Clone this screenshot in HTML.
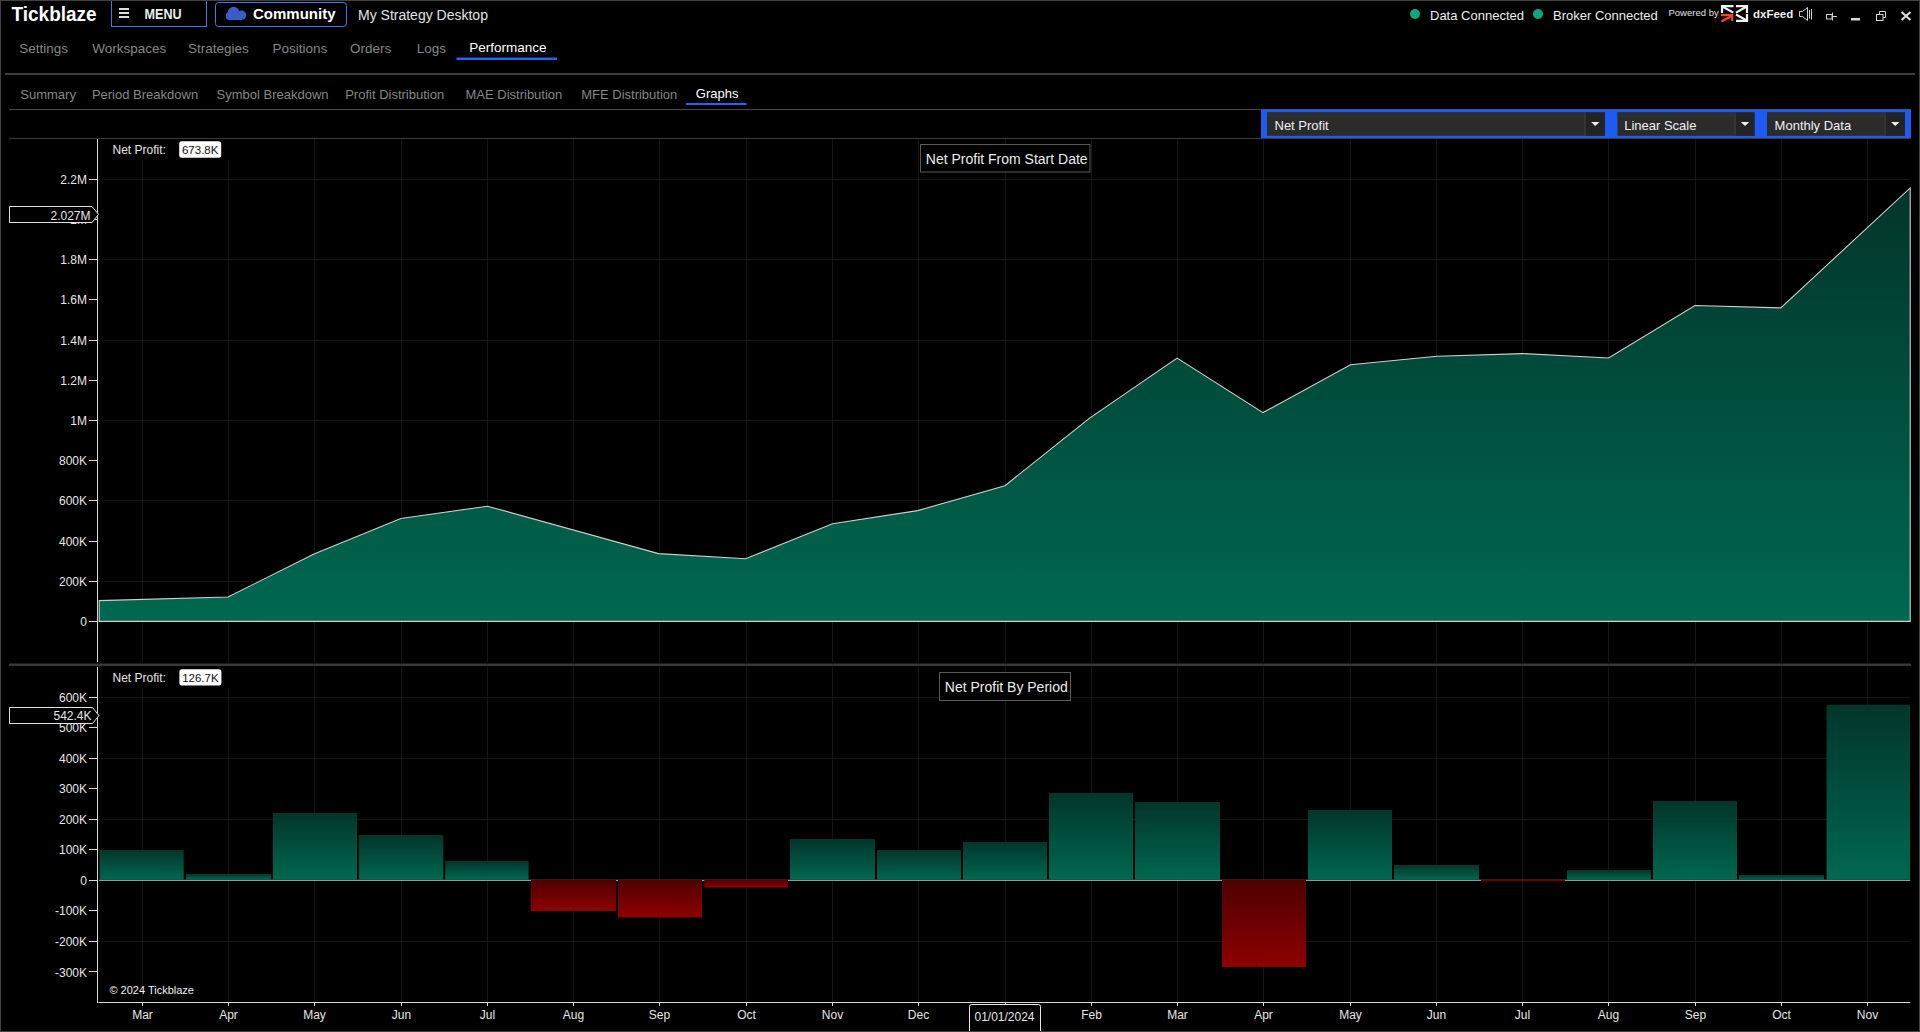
<!DOCTYPE html>
<html><head><meta charset="utf-8"><title>Tickblaze</title>
<style>
html,body{margin:0;padding:0;background:#000;width:1920px;height:1032px;overflow:hidden;}
svg{display:block;font-family:"Liberation Sans", sans-serif;}
</style></head><body>
<svg width="1920" height="1032" viewBox="0 0 1920 1032" shape-rendering="auto">
<rect x="0" y="0" width="1920" height="1032" fill="#000"/>
<rect x="0.5" y="0.5" width="1919" height="1031" fill="none" stroke="#404040" stroke-width="1" rx="0" />
<text transform="translate(11.5,20.9) scale(1,1.075)" font-size="19" fill="#ffffff" font-weight="bold">Tickblaze</text>
<rect x="111.5" y="-2" width="95" height="28.5" fill="none" stroke="#4677f0" stroke-width="1" rx="0" />
<rect x="119" y="8" width="10" height="2" fill="#dedede" stroke="none" stroke-width="1" rx="0" />
<rect x="119" y="12" width="10" height="2" fill="#dedede" stroke="none" stroke-width="1" rx="0" />
<rect x="119" y="16" width="10" height="2" fill="#dedede" stroke="none" stroke-width="1" rx="0" />
<text transform="translate(144.6,18.9) scale(0.9,1)" font-size="14" fill="#ececec" font-weight="bold" text-anchor="start">MENU</text>
<rect x="215.5" y="2.5" width="131" height="24" fill="none" stroke="#4677f0" stroke-width="1" rx="3" />
<g fill="#3a5cc8"><circle cx="233.6" cy="12.6" r="5.9"/><circle cx="241.6" cy="15.3" r="4.7"/><circle cx="229.6" cy="16" r="3.9"/><rect x="229.6" y="13" width="12" height="7"/></g>
<text x="253" y="18.9" font-size="15" fill="#ffffff" font-weight="bold" text-anchor="start" >Community</text>
<text x="358" y="20" font-size="14" fill="#e4e4e4" font-weight="normal" text-anchor="start" >My Strategy Desktop</text>
<circle cx="1415" cy="14" r="5" fill="#0ba882"/>
<text x="1430" y="19.7" font-size="13" fill="#ececec" font-weight="normal" text-anchor="start" >Data Connected</text>
<circle cx="1538" cy="14" r="5" fill="#0ba882"/>
<text x="1553" y="19.7" font-size="13" fill="#ececec" font-weight="normal" text-anchor="start" >Broker Connected</text>
<text x="1668.5" y="15.7" font-size="9.5" fill="#e0e0e0" font-weight="normal" text-anchor="start" >Powered by</text>
<g fill="none" stroke="#f4f4f4" stroke-width="2.2" stroke-linecap="butt"><path d="M1722,13 V6.1 H1733.5"/><path d="M1722.8,6.8 L1733.3,12.6"/><path d="M1736,6.1 H1747 V13"/><path d="M1746.3,6.8 L1736,12.6"/><path d="M1736,20.9 H1747 V14"/><path d="M1746.3,20.2 L1736,14.5"/></g><g fill="none" stroke="#f2442a" stroke-width="2.2"><path d="M1721.5,21.5 L1732,15.8"/><path d="M1721,15.2 H1732.2 V21"/></g>
<text x="1753" y="17.5" font-size="11.5" fill="#f0f0f0" font-weight="bold" text-anchor="start" >dxFeed</text>
<g fill="none" stroke="#cfcfcf" stroke-width="1"><path d="M1799.5,11.5 H1802.5 L1807.5,7.5 V20.5 L1802.5,16.5 H1799.5 Z"/><path d="M1809.5,10 V18.5"/><path d="M1811.5,9 V19.5"/></g>
<g fill="none" stroke="#d0d0d0" stroke-width="1"><rect x="1826.5" y="14.5" width="5.5" height="4.5"/><path d="M1832.5,12.5 V20.5"/><path d="M1832.5,16.5 H1837"/></g>
<rect x="1851" y="18" width="9" height="2.5" fill="#d6d6d6" stroke="none" stroke-width="1" rx="0" />
<g fill="none" stroke="#d6d6d6" stroke-width="1"><path d="M1879.5,14 V11.5 H1885.5 V17.5 H1883"/><rect x="1876.5" y="14.5" width="6.5" height="6"/></g>
<g stroke="#e0e0e0" stroke-width="2"><path d="M1901.5,12 L1910.5,20 M1910.5,12 L1901.5,20"/></g>
<text x="19.2" y="53" font-size="13.5" fill="#868686" font-weight="normal" text-anchor="start" >Settings</text>
<text x="92.2" y="53" font-size="13.5" fill="#868686" font-weight="normal" text-anchor="start" >Workspaces</text>
<text x="188" y="53" font-size="13.5" fill="#868686" font-weight="normal" text-anchor="start" >Strategies</text>
<text x="272.5" y="53" font-size="13.5" fill="#868686" font-weight="normal" text-anchor="start" >Positions</text>
<text x="350" y="53" font-size="13.5" fill="#868686" font-weight="normal" text-anchor="start" >Orders</text>
<text x="416.7" y="53" font-size="13.5" fill="#868686" font-weight="normal" text-anchor="start" >Logs</text>
<text x="469.2" y="52" font-size="13.5" fill="#ffffff" font-weight="normal" text-anchor="start" >Performance</text>
<rect x="456.5" y="57.5" width="100.5" height="2.5" fill="#2563f5" stroke="none" stroke-width="1" rx="0" />
<rect x="5" y="73" width="1910" height="2" fill="#3d3d3d" stroke="none" stroke-width="1" rx="0" />
<text x="20.3" y="99" font-size="13" fill="#868686" font-weight="normal" text-anchor="start" >Summary</text>
<text x="91.9" y="99" font-size="13" fill="#868686" font-weight="normal" text-anchor="start" >Period Breakdown</text>
<text x="216.6" y="99" font-size="13" fill="#868686" font-weight="normal" text-anchor="start" >Symbol Breakdown</text>
<text x="345.2" y="99" font-size="13" fill="#868686" font-weight="normal" text-anchor="start" >Profit Distribution</text>
<text x="465.5" y="99" font-size="13" fill="#868686" font-weight="normal" text-anchor="start" >MAE Distribution</text>
<text x="581.2" y="99" font-size="13" fill="#868686" font-weight="normal" text-anchor="start" >MFE Distribution</text>
<text x="695.8" y="98" font-size="13" fill="#ffffff" font-weight="normal" text-anchor="start" >Graphs</text>
<rect x="686" y="103" width="60.5" height="2" fill="#2563f5" stroke="none" stroke-width="1" rx="0" />
<rect x="9" y="109" width="1902" height="1" fill="#4a4a4a" stroke="none" stroke-width="1" rx="0" />
<rect x="1261" y="109.5" width="650" height="29" fill="#1f5af2" stroke="none" stroke-width="1" rx="0" />
<rect x="1267" y="112.3" width="338" height="23.5" fill="#2b2b2b" stroke="none" stroke-width="1" rx="0" />
<rect x="1267" y="112.3" width="317.5" height="5" fill="#2f2f2f" stroke="none" stroke-width="1" rx="0" />
<rect x="1584.5" y="112.3" width="20.5" height="23.5" fill="#232323" stroke="none" stroke-width="1" rx="0" />
<rect x="1584.5" y="112.3" width="1" height="23.5" fill="#444444" stroke="none" stroke-width="1" rx="0" />
<text x="1274.5" y="129.8" font-size="13" fill="#f0f0f0" font-weight="normal" text-anchor="start" >Net Profit</text>
<path d="M1591.05,122 H1599.45 L1595.25,126 Z" fill="#f0f0f0"/>
<rect x="1617.5" y="112.3" width="137.0" height="23.5" fill="#2b2b2b" stroke="none" stroke-width="1" rx="0" />
<rect x="1617.5" y="112.3" width="117.0" height="5" fill="#2f2f2f" stroke="none" stroke-width="1" rx="0" />
<rect x="1734.5" y="112.3" width="20.0" height="23.5" fill="#232323" stroke="none" stroke-width="1" rx="0" />
<rect x="1734.5" y="112.3" width="1" height="23.5" fill="#444444" stroke="none" stroke-width="1" rx="0" />
<text x="1624.2" y="129.8" font-size="13" fill="#f0f0f0" font-weight="normal" text-anchor="start" >Linear Scale</text>
<path d="M1740.8,122 H1749.2 L1745.0,126 Z" fill="#f0f0f0"/>
<rect x="1767" y="112.3" width="138" height="23.5" fill="#2b2b2b" stroke="none" stroke-width="1" rx="0" />
<rect x="1767" y="112.3" width="117.5" height="5" fill="#2f2f2f" stroke="none" stroke-width="1" rx="0" />
<rect x="1884.5" y="112.3" width="20.5" height="23.5" fill="#232323" stroke="none" stroke-width="1" rx="0" />
<rect x="1884.5" y="112.3" width="1" height="23.5" fill="#444444" stroke="none" stroke-width="1" rx="0" />
<text x="1774.6" y="129.8" font-size="13" fill="#f0f0f0" font-weight="normal" text-anchor="start" >Monthly Data</text>
<path d="M1891.05,122 H1899.45 L1895.25,126 Z" fill="#f0f0f0"/>
<rect x="9" y="138" width="1902" height="1" fill="#3a3a3a" stroke="none" stroke-width="1" rx="0" />
<rect x="98" y="581" width="1812.2" height="1" fill="#141414" stroke="none" stroke-width="1" rx="0" />
<rect x="98" y="500" width="1812.2" height="1" fill="#141414" stroke="none" stroke-width="1" rx="0" />
<rect x="98" y="420" width="1812.2" height="1" fill="#141414" stroke="none" stroke-width="1" rx="0" />
<rect x="98" y="340" width="1812.2" height="1" fill="#141414" stroke="none" stroke-width="1" rx="0" />
<rect x="98" y="259" width="1812.2" height="1" fill="#141414" stroke="none" stroke-width="1" rx="0" />
<rect x="98" y="179" width="1812.2" height="1" fill="#141414" stroke="none" stroke-width="1" rx="0" />
<rect x="142" y="139" width="1" height="523" fill="#141414" stroke="none" stroke-width="1" rx="0" />
<rect x="228" y="139" width="1" height="523" fill="#141414" stroke="none" stroke-width="1" rx="0" />
<rect x="314" y="139" width="1" height="523" fill="#141414" stroke="none" stroke-width="1" rx="0" />
<rect x="401" y="139" width="1" height="523" fill="#141414" stroke="none" stroke-width="1" rx="0" />
<rect x="487" y="139" width="1" height="523" fill="#141414" stroke="none" stroke-width="1" rx="0" />
<rect x="573" y="139" width="1" height="523" fill="#141414" stroke="none" stroke-width="1" rx="0" />
<rect x="659" y="139" width="1" height="523" fill="#141414" stroke="none" stroke-width="1" rx="0" />
<rect x="746" y="139" width="1" height="523" fill="#141414" stroke="none" stroke-width="1" rx="0" />
<rect x="832" y="139" width="1" height="523" fill="#141414" stroke="none" stroke-width="1" rx="0" />
<rect x="918" y="139" width="1" height="523" fill="#141414" stroke="none" stroke-width="1" rx="0" />
<rect x="1005" y="139" width="1" height="523" fill="#141414" stroke="none" stroke-width="1" rx="0" />
<rect x="1091" y="139" width="1" height="523" fill="#141414" stroke="none" stroke-width="1" rx="0" />
<rect x="1177" y="139" width="1" height="523" fill="#141414" stroke="none" stroke-width="1" rx="0" />
<rect x="1263" y="139" width="1" height="523" fill="#141414" stroke="none" stroke-width="1" rx="0" />
<rect x="1350" y="139" width="1" height="523" fill="#141414" stroke="none" stroke-width="1" rx="0" />
<rect x="1436" y="139" width="1" height="523" fill="#141414" stroke="none" stroke-width="1" rx="0" />
<rect x="1522" y="139" width="1" height="523" fill="#141414" stroke="none" stroke-width="1" rx="0" />
<rect x="1608" y="139" width="1" height="523" fill="#141414" stroke="none" stroke-width="1" rx="0" />
<rect x="1695" y="139" width="1" height="523" fill="#141414" stroke="none" stroke-width="1" rx="0" />
<rect x="1781" y="139" width="1" height="523" fill="#141414" stroke="none" stroke-width="1" rx="0" />
<rect x="1867" y="139" width="1" height="523" fill="#141414" stroke="none" stroke-width="1" rx="0" />
<defs><linearGradient id="ga" gradientUnits="userSpaceOnUse" x1="0" y1="188" x2="0" y2="621"><stop offset="0" stop-color="#02352a"/><stop offset="1" stop-color="#006850"/></linearGradient></defs>
<polygon points="99.2,621.4 99.2,600.6 228.0,597.0 314.0,554.0 400.9,518.5 487.5,506.2 658.5,553.6 745.6,558.8 832.5,523.8 917.7,510.6 1005.0,485.7 1089.6,418.1 1177.1,358.1 1263.0,412.6 1350.5,364.7 1437.0,356.2 1522.7,353.6 1608.6,358.0 1695.0,305.5 1780.8,307.9 1910.2,187.9 1910.2,621.4" fill="url(#ga)" stroke="#cfcfcf" stroke-width="1.1"/>
<rect x="97" y="139" width="1" height="523" fill="#d8d8d8" stroke="none" stroke-width="1" rx="0" />
<rect x="89" y="621" width="8" height="1" fill="#d8d8d8" stroke="none" stroke-width="1" rx="0" />
<text x="87" y="626.0" font-size="12" fill="#e6e6e6" font-weight="normal" text-anchor="end" >0</text>
<rect x="89" y="581" width="8" height="1" fill="#d8d8d8" stroke="none" stroke-width="1" rx="0" />
<text x="87" y="585.8" font-size="12" fill="#e6e6e6" font-weight="normal" text-anchor="end" >200K</text>
<rect x="89" y="541" width="8" height="1" fill="#d8d8d8" stroke="none" stroke-width="1" rx="0" />
<text x="87" y="545.6" font-size="12" fill="#e6e6e6" font-weight="normal" text-anchor="end" >400K</text>
<rect x="89" y="500" width="8" height="1" fill="#d8d8d8" stroke="none" stroke-width="1" rx="0" />
<text x="87" y="505.4" font-size="12" fill="#e6e6e6" font-weight="normal" text-anchor="end" >600K</text>
<rect x="89" y="460" width="8" height="1" fill="#d8d8d8" stroke="none" stroke-width="1" rx="0" />
<text x="87" y="465.20000000000005" font-size="12" fill="#e6e6e6" font-weight="normal" text-anchor="end" >800K</text>
<rect x="89" y="420" width="8" height="1" fill="#d8d8d8" stroke="none" stroke-width="1" rx="0" />
<text x="87" y="425.0" font-size="12" fill="#e6e6e6" font-weight="normal" text-anchor="end" >1M</text>
<rect x="89" y="380" width="8" height="1" fill="#d8d8d8" stroke="none" stroke-width="1" rx="0" />
<text x="87" y="384.8" font-size="12" fill="#e6e6e6" font-weight="normal" text-anchor="end" >1.2M</text>
<rect x="89" y="340" width="8" height="1" fill="#d8d8d8" stroke="none" stroke-width="1" rx="0" />
<text x="87" y="344.6" font-size="12" fill="#e6e6e6" font-weight="normal" text-anchor="end" >1.4M</text>
<rect x="89" y="299" width="8" height="1" fill="#d8d8d8" stroke="none" stroke-width="1" rx="0" />
<text x="87" y="304.40000000000003" font-size="12" fill="#e6e6e6" font-weight="normal" text-anchor="end" >1.6M</text>
<rect x="89" y="259" width="8" height="1" fill="#d8d8d8" stroke="none" stroke-width="1" rx="0" />
<text x="87" y="264.20000000000005" font-size="12" fill="#e6e6e6" font-weight="normal" text-anchor="end" >1.8M</text>
<rect x="89" y="219" width="8" height="1" fill="#d8d8d8" stroke="none" stroke-width="1" rx="0" />
<text x="87" y="224.00000000000003" font-size="12" fill="#e6e6e6" font-weight="normal" text-anchor="end" >2M</text>
<rect x="89" y="179" width="8" height="1" fill="#d8d8d8" stroke="none" stroke-width="1" rx="0" />
<text x="87" y="183.79999999999998" font-size="12" fill="#e6e6e6" font-weight="normal" text-anchor="end" >2.2M</text>
<rect x="98" y="139" width="137" height="21" fill="#000" stroke="none" stroke-width="1" rx="0" />
<text x="112.5" y="153.7" font-size="12" fill="#e6e6e6" font-weight="normal" text-anchor="start" >Net Profit:</text>
<rect x="179.2" y="141.3" width="42" height="16.4" fill="#ffffff" stroke="none" stroke-width="1" rx="2.5" />
<text x="200.2" y="153.6" font-size="11.5" fill="#111111" font-weight="normal" text-anchor="middle" >673.8K</text>
<rect x="920.5" y="144.5" width="169.5" height="27.5" fill="#000" stroke="#5a5a5a" stroke-width="1" rx="0" />
<text x="925.8" y="163.6" font-size="14" fill="#ececec" font-weight="normal" text-anchor="start" >Net Profit From Start Date</text>
<path d="M9.5,206.5 H92 L98.5,214.3 L92,222.5 H9.5 Z" fill="#000" stroke="#e0e0e0" stroke-width="1"/>
<text x="90.5" y="219.8" font-size="12" fill="#e6e6e6" font-weight="normal" text-anchor="end" >2.027M</text>
<rect x="9" y="663.5" width="1902" height="2.5" fill="#383838" stroke="none" stroke-width="1" rx="0" />
<rect x="98" y="697" width="1812.2" height="1" fill="#141414" stroke="none" stroke-width="1" rx="0" />
<rect x="98" y="758" width="1812.2" height="1" fill="#141414" stroke="none" stroke-width="1" rx="0" />
<rect x="98" y="819" width="1812.2" height="1" fill="#141414" stroke="none" stroke-width="1" rx="0" />
<rect x="98" y="941" width="1812.2" height="1" fill="#141414" stroke="none" stroke-width="1" rx="0" />
<rect x="142" y="667" width="1" height="335" fill="#141414" stroke="none" stroke-width="1" rx="0" />
<rect x="228" y="667" width="1" height="335" fill="#141414" stroke="none" stroke-width="1" rx="0" />
<rect x="314" y="667" width="1" height="335" fill="#141414" stroke="none" stroke-width="1" rx="0" />
<rect x="401" y="667" width="1" height="335" fill="#141414" stroke="none" stroke-width="1" rx="0" />
<rect x="487" y="667" width="1" height="335" fill="#141414" stroke="none" stroke-width="1" rx="0" />
<rect x="573" y="667" width="1" height="335" fill="#141414" stroke="none" stroke-width="1" rx="0" />
<rect x="659" y="667" width="1" height="335" fill="#141414" stroke="none" stroke-width="1" rx="0" />
<rect x="746" y="667" width="1" height="335" fill="#141414" stroke="none" stroke-width="1" rx="0" />
<rect x="832" y="667" width="1" height="335" fill="#141414" stroke="none" stroke-width="1" rx="0" />
<rect x="918" y="667" width="1" height="335" fill="#141414" stroke="none" stroke-width="1" rx="0" />
<rect x="1005" y="667" width="1" height="335" fill="#141414" stroke="none" stroke-width="1" rx="0" />
<rect x="1091" y="667" width="1" height="335" fill="#141414" stroke="none" stroke-width="1" rx="0" />
<rect x="1177" y="667" width="1" height="335" fill="#141414" stroke="none" stroke-width="1" rx="0" />
<rect x="1263" y="667" width="1" height="335" fill="#141414" stroke="none" stroke-width="1" rx="0" />
<rect x="1350" y="667" width="1" height="335" fill="#141414" stroke="none" stroke-width="1" rx="0" />
<rect x="1436" y="667" width="1" height="335" fill="#141414" stroke="none" stroke-width="1" rx="0" />
<rect x="1522" y="667" width="1" height="335" fill="#141414" stroke="none" stroke-width="1" rx="0" />
<rect x="1608" y="667" width="1" height="335" fill="#141414" stroke="none" stroke-width="1" rx="0" />
<rect x="1695" y="667" width="1" height="335" fill="#141414" stroke="none" stroke-width="1" rx="0" />
<rect x="1781" y="667" width="1" height="335" fill="#141414" stroke="none" stroke-width="1" rx="0" />
<rect x="1867" y="667" width="1" height="335" fill="#141414" stroke="none" stroke-width="1" rx="0" />
<line x1="99" y1="880.3" x2="1910.2" y2="880.3" stroke="#bdbdbd" stroke-width="1" />
<defs><linearGradient id="gg" x1="0" y1="0" x2="0" y2="1"><stop offset="0" stop-color="#02352a"/><stop offset="1" stop-color="#006850"/></linearGradient><linearGradient id="gr" x1="0" y1="0" x2="0" y2="1"><stop offset="0" stop-color="#4e0000"/><stop offset="1" stop-color="#8e0000"/></linearGradient></defs>
<rect x="99.6" y="850" width="84.1" height="29.8" fill="url(#gg)" stroke="none" stroke-width="1" rx="0" />
<rect x="185.9" y="874" width="85.3" height="5.8" fill="url(#gg)" stroke="none" stroke-width="1" rx="0" />
<rect x="272.9" y="813" width="84.1" height="66.8" fill="url(#gg)" stroke="none" stroke-width="1" rx="0" />
<rect x="358.9" y="835" width="84.4" height="44.8" fill="url(#gg)" stroke="none" stroke-width="1" rx="0" />
<rect x="445.2" y="861" width="83.4" height="18.8" fill="url(#gg)" stroke="none" stroke-width="1" rx="0" />
<rect x="531" y="879.8" width="85" height="31.2" fill="url(#gr)" stroke="none" stroke-width="1" rx="0" />
<rect x="618" y="879.8" width="84" height="37.7" fill="url(#gr)" stroke="none" stroke-width="1" rx="0" />
<rect x="704.2" y="879.8" width="83.8" height="7.7" fill="url(#gr)" stroke="none" stroke-width="1" rx="0" />
<rect x="790" y="839" width="85" height="40.8" fill="url(#gg)" stroke="none" stroke-width="1" rx="0" />
<rect x="877" y="850" width="84" height="29.8" fill="url(#gg)" stroke="none" stroke-width="1" rx="0" />
<rect x="963" y="842" width="84" height="37.8" fill="url(#gg)" stroke="none" stroke-width="1" rx="0" />
<rect x="1049" y="793" width="84" height="86.8" fill="url(#gg)" stroke="none" stroke-width="1" rx="0" />
<rect x="1135" y="802" width="85" height="77.8" fill="url(#gg)" stroke="none" stroke-width="1" rx="0" />
<rect x="1222" y="879.8" width="84" height="87.2" fill="url(#gr)" stroke="none" stroke-width="1" rx="0" />
<rect x="1308" y="810" width="84" height="69.8" fill="url(#gg)" stroke="none" stroke-width="1" rx="0" />
<rect x="1394" y="865" width="85" height="14.8" fill="url(#gg)" stroke="none" stroke-width="1" rx="0" />
<rect x="1481" y="879.8" width="84" height="1.4" fill="url(#gr)" stroke="none" stroke-width="1" rx="0" />
<rect x="1567" y="870" width="84" height="9.8" fill="url(#gg)" stroke="none" stroke-width="1" rx="0" />
<rect x="1653" y="801" width="84" height="78.8" fill="url(#gg)" stroke="none" stroke-width="1" rx="0" />
<rect x="1739" y="875" width="85" height="4.8" fill="url(#gg)" stroke="none" stroke-width="1" rx="0" />
<rect x="1826.6" y="704.8" width="83.4" height="175.0" fill="url(#gg)" stroke="none" stroke-width="1" rx="0" />
<rect x="97" y="667" width="1" height="336" fill="#d8d8d8" stroke="none" stroke-width="1" rx="0" />
<rect x="89" y="971" width="8" height="1" fill="#d8d8d8" stroke="none" stroke-width="1" rx="0" />
<text x="87" y="976.4999999999999" font-size="12" fill="#e6e6e6" font-weight="normal" text-anchor="end" >-300K</text>
<rect x="89" y="941" width="8" height="1" fill="#d8d8d8" stroke="none" stroke-width="1" rx="0" />
<text x="87" y="945.9666666666666" font-size="12" fill="#e6e6e6" font-weight="normal" text-anchor="end" >-200K</text>
<rect x="89" y="910" width="8" height="1" fill="#d8d8d8" stroke="none" stroke-width="1" rx="0" />
<text x="87" y="915.4333333333333" font-size="12" fill="#e6e6e6" font-weight="normal" text-anchor="end" >-100K</text>
<rect x="89" y="880" width="8" height="1" fill="#d8d8d8" stroke="none" stroke-width="1" rx="0" />
<text x="87" y="884.9" font-size="12" fill="#e6e6e6" font-weight="normal" text-anchor="end" >0</text>
<rect x="89" y="849" width="8" height="1" fill="#d8d8d8" stroke="none" stroke-width="1" rx="0" />
<text x="87" y="854.3666666666667" font-size="12" fill="#e6e6e6" font-weight="normal" text-anchor="end" >100K</text>
<rect x="89" y="819" width="8" height="1" fill="#d8d8d8" stroke="none" stroke-width="1" rx="0" />
<text x="87" y="823.8333333333334" font-size="12" fill="#e6e6e6" font-weight="normal" text-anchor="end" >200K</text>
<rect x="89" y="788" width="8" height="1" fill="#d8d8d8" stroke="none" stroke-width="1" rx="0" />
<text x="87" y="793.3000000000001" font-size="12" fill="#e6e6e6" font-weight="normal" text-anchor="end" >300K</text>
<rect x="89" y="758" width="8" height="1" fill="#d8d8d8" stroke="none" stroke-width="1" rx="0" />
<text x="87" y="762.7666666666667" font-size="12" fill="#e6e6e6" font-weight="normal" text-anchor="end" >400K</text>
<rect x="89" y="727" width="8" height="1" fill="#d8d8d8" stroke="none" stroke-width="1" rx="0" />
<text x="87" y="732.2333333333333" font-size="12" fill="#e6e6e6" font-weight="normal" text-anchor="end" >500K</text>
<rect x="89" y="697" width="8" height="1" fill="#d8d8d8" stroke="none" stroke-width="1" rx="0" />
<text x="87" y="701.7" font-size="12" fill="#e6e6e6" font-weight="normal" text-anchor="end" >600K</text>
<rect x="98.5" y="1002" width="1811.7" height="1" fill="#d8d8d8" stroke="none" stroke-width="1" rx="0" />
<rect x="142" y="1002" width="1" height="4" fill="#d8d8d8" stroke="none" stroke-width="1" rx="0" />
<text x="142.5" y="1019" font-size="12" fill="#e6e6e6" font-weight="normal" text-anchor="middle" >Mar</text>
<rect x="228" y="1002" width="1" height="4" fill="#d8d8d8" stroke="none" stroke-width="1" rx="0" />
<text x="228.5" y="1019" font-size="12" fill="#e6e6e6" font-weight="normal" text-anchor="middle" >Apr</text>
<rect x="314" y="1002" width="1" height="4" fill="#d8d8d8" stroke="none" stroke-width="1" rx="0" />
<text x="314.5" y="1019" font-size="12" fill="#e6e6e6" font-weight="normal" text-anchor="middle" >May</text>
<rect x="401" y="1002" width="1" height="4" fill="#d8d8d8" stroke="none" stroke-width="1" rx="0" />
<text x="401.5" y="1019" font-size="12" fill="#e6e6e6" font-weight="normal" text-anchor="middle" >Jun</text>
<rect x="487" y="1002" width="1" height="4" fill="#d8d8d8" stroke="none" stroke-width="1" rx="0" />
<text x="487.5" y="1019" font-size="12" fill="#e6e6e6" font-weight="normal" text-anchor="middle" >Jul</text>
<rect x="573" y="1002" width="1" height="4" fill="#d8d8d8" stroke="none" stroke-width="1" rx="0" />
<text x="573.5" y="1019" font-size="12" fill="#e6e6e6" font-weight="normal" text-anchor="middle" >Aug</text>
<rect x="659" y="1002" width="1" height="4" fill="#d8d8d8" stroke="none" stroke-width="1" rx="0" />
<text x="659.5" y="1019" font-size="12" fill="#e6e6e6" font-weight="normal" text-anchor="middle" >Sep</text>
<rect x="746" y="1002" width="1" height="4" fill="#d8d8d8" stroke="none" stroke-width="1" rx="0" />
<text x="746.5" y="1019" font-size="12" fill="#e6e6e6" font-weight="normal" text-anchor="middle" >Oct</text>
<rect x="832" y="1002" width="1" height="4" fill="#d8d8d8" stroke="none" stroke-width="1" rx="0" />
<text x="832.5" y="1019" font-size="12" fill="#e6e6e6" font-weight="normal" text-anchor="middle" >Nov</text>
<rect x="918" y="1002" width="1" height="4" fill="#d8d8d8" stroke="none" stroke-width="1" rx="0" />
<text x="918.5" y="1019" font-size="12" fill="#e6e6e6" font-weight="normal" text-anchor="middle" >Dec</text>
<rect x="1005" y="1002" width="1" height="4" fill="#d8d8d8" stroke="none" stroke-width="1" rx="0" />
<rect x="1091" y="1002" width="1" height="4" fill="#d8d8d8" stroke="none" stroke-width="1" rx="0" />
<text x="1091.5" y="1019" font-size="12" fill="#e6e6e6" font-weight="normal" text-anchor="middle" >Feb</text>
<rect x="1177" y="1002" width="1" height="4" fill="#d8d8d8" stroke="none" stroke-width="1" rx="0" />
<text x="1177.5" y="1019" font-size="12" fill="#e6e6e6" font-weight="normal" text-anchor="middle" >Mar</text>
<rect x="1263" y="1002" width="1" height="4" fill="#d8d8d8" stroke="none" stroke-width="1" rx="0" />
<text x="1263.5" y="1019" font-size="12" fill="#e6e6e6" font-weight="normal" text-anchor="middle" >Apr</text>
<rect x="1350" y="1002" width="1" height="4" fill="#d8d8d8" stroke="none" stroke-width="1" rx="0" />
<text x="1350.5" y="1019" font-size="12" fill="#e6e6e6" font-weight="normal" text-anchor="middle" >May</text>
<rect x="1436" y="1002" width="1" height="4" fill="#d8d8d8" stroke="none" stroke-width="1" rx="0" />
<text x="1436.5" y="1019" font-size="12" fill="#e6e6e6" font-weight="normal" text-anchor="middle" >Jun</text>
<rect x="1522" y="1002" width="1" height="4" fill="#d8d8d8" stroke="none" stroke-width="1" rx="0" />
<text x="1522.5" y="1019" font-size="12" fill="#e6e6e6" font-weight="normal" text-anchor="middle" >Jul</text>
<rect x="1608" y="1002" width="1" height="4" fill="#d8d8d8" stroke="none" stroke-width="1" rx="0" />
<text x="1608.5" y="1019" font-size="12" fill="#e6e6e6" font-weight="normal" text-anchor="middle" >Aug</text>
<rect x="1695" y="1002" width="1" height="4" fill="#d8d8d8" stroke="none" stroke-width="1" rx="0" />
<text x="1695.5" y="1019" font-size="12" fill="#e6e6e6" font-weight="normal" text-anchor="middle" >Sep</text>
<rect x="1781" y="1002" width="1" height="4" fill="#d8d8d8" stroke="none" stroke-width="1" rx="0" />
<text x="1781.5" y="1019" font-size="12" fill="#e6e6e6" font-weight="normal" text-anchor="middle" >Oct</text>
<rect x="1867" y="1002" width="1" height="4" fill="#d8d8d8" stroke="none" stroke-width="1" rx="0" />
<text x="1867.5" y="1019" font-size="12" fill="#e6e6e6" font-weight="normal" text-anchor="middle" >Nov</text>
<path d="M969.5,1032 V1006.5 Q969.5,1004.5 971.5,1004.5 H1038.5 Q1040.5,1004.5 1040.5,1006.5 V1032" fill="#000" stroke="#e8e8e8" stroke-width="1"/>
<text x="1004.5" y="1020.6" font-size="12" fill="#e6e6e6" font-weight="normal" text-anchor="middle" >01/01/2024</text>
<rect x="98" y="667" width="137" height="21" fill="#000" stroke="none" stroke-width="1" rx="0" />
<text x="112.5" y="681.8" font-size="12" fill="#e6e6e6" font-weight="normal" text-anchor="start" >Net Profit:</text>
<rect x="179.4" y="669.3" width="42" height="16.3" fill="#ffffff" stroke="none" stroke-width="1" rx="2.5" />
<text x="200.4" y="681.6" font-size="11.5" fill="#111111" font-weight="normal" text-anchor="middle" >126.7K</text>
<rect x="939.5" y="672.5" width="131" height="28" fill="#000" stroke="#5a5a5a" stroke-width="1" rx="0" />
<text x="944.8" y="691.7" font-size="14" fill="#ececec" font-weight="normal" text-anchor="start" >Net Profit By Period</text>
<path d="M9.5,707.5 H92.5 L99,715.6 L92.5,723.5 H9.5 Z" fill="#000" stroke="#e0e0e0" stroke-width="1"/>
<text x="91.5" y="720.3" font-size="12" fill="#e6e6e6" font-weight="normal" text-anchor="end" >542.4K</text>
<text x="109.4" y="994.2" font-size="11" fill="#f0f0f0" font-weight="normal" text-anchor="start" >© 2024 Tickblaze</text>
<rect x="0.5" y="0.5" width="1919" height="1031" fill="none" stroke="#404040" stroke-width="1" rx="0" />
</svg>
</body></html>
